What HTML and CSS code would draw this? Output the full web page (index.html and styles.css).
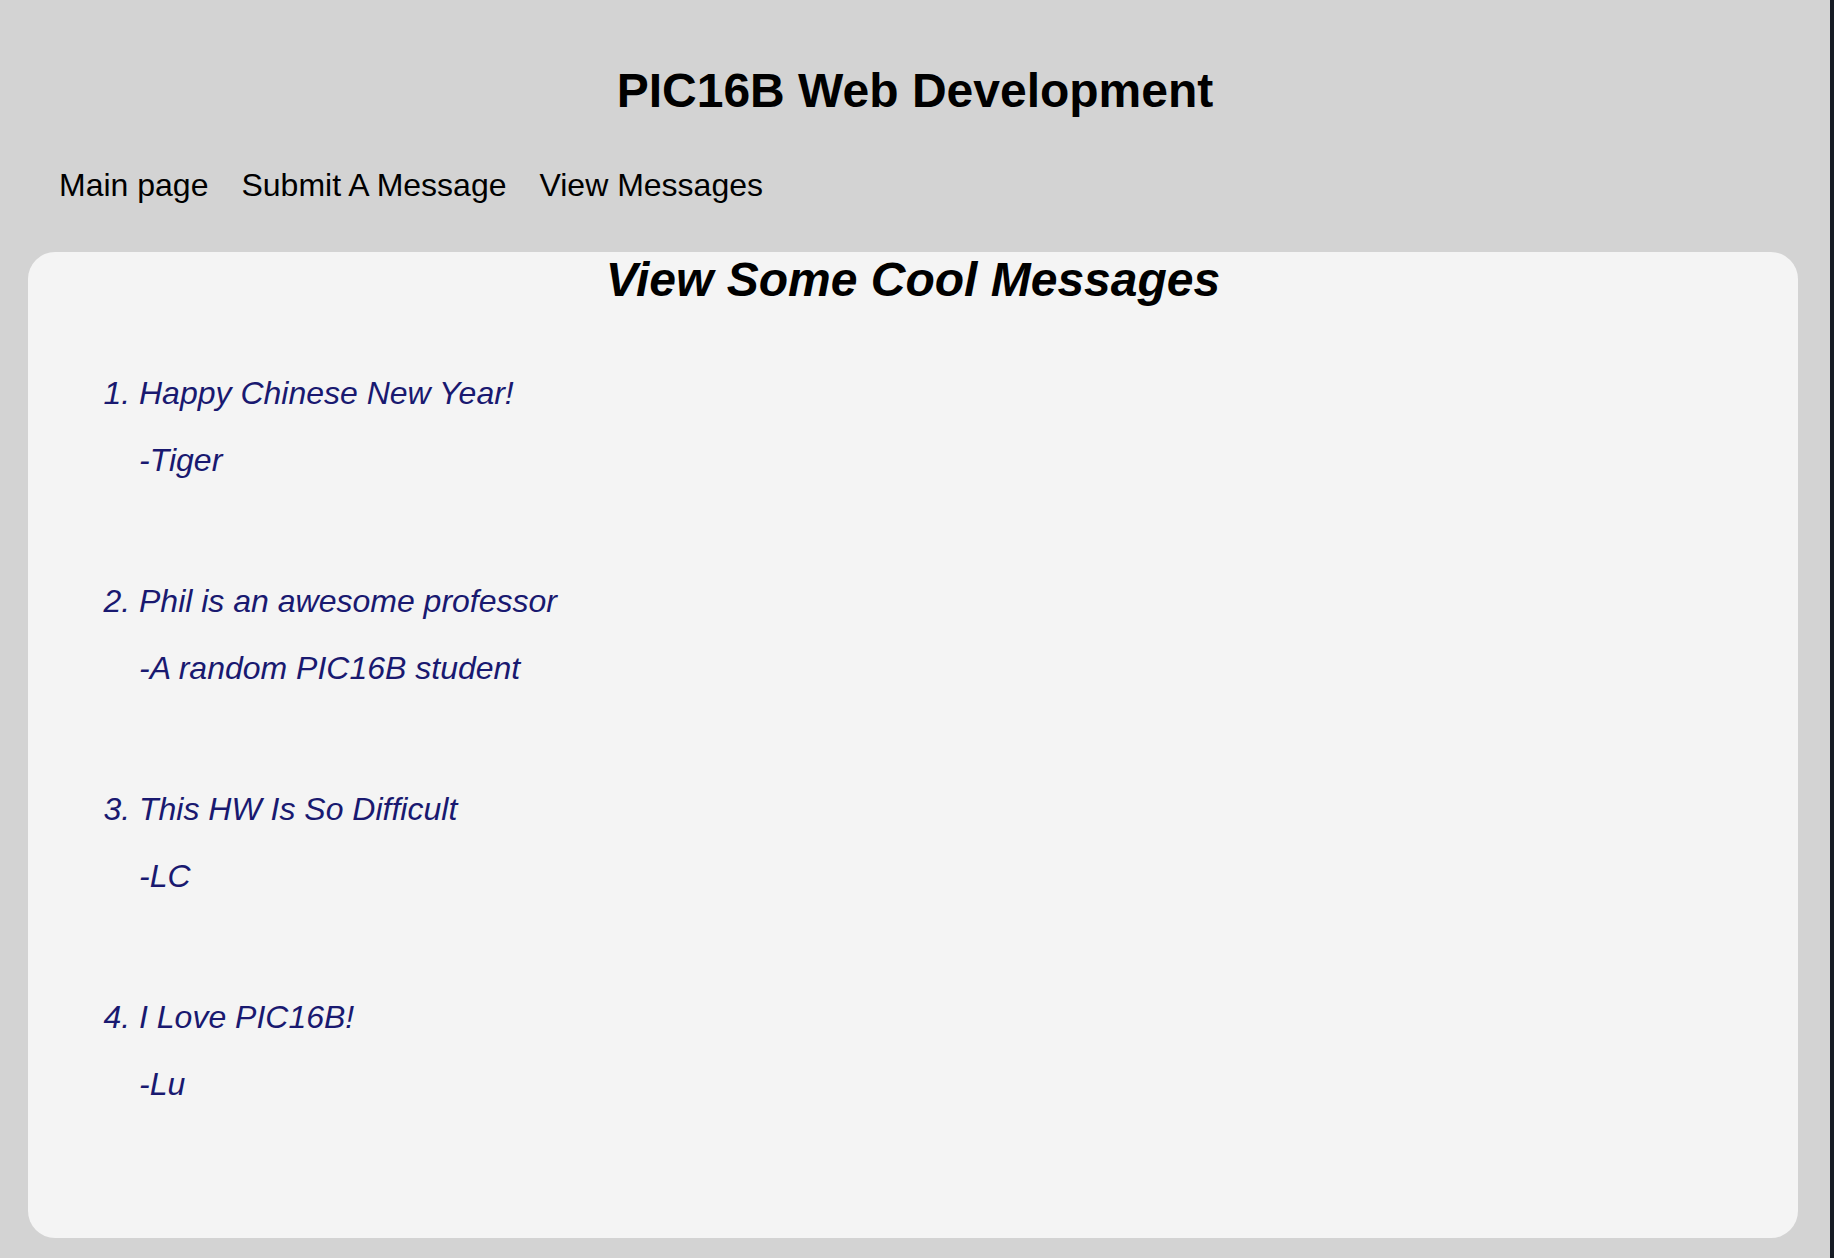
FILE: index.html
```html
<!DOCTYPE html>
<html lang="en">
<head>
<meta charset="utf-8">
<title>PIC16B Web Development</title>
<link rel="stylesheet" href="styles.css">
</head>
<body>
<header class="site-header">
  <h1 class="site-title">PIC16B Web Development</h1>
  <nav class="site-nav">
    <a class="nav-link" href="#">Main page</a>
    <a class="nav-link" href="#">Submit A Message</a>
    <a class="nav-link" href="#">View Messages</a>
  </nav>
</header>
<main class="card">
  <h2 class="card-title">View Some Cool Messages</h2>
  <ol class="messages">
    <li class="message">
      <div class="message-text">Happy Chinese New Year!</div>
      <p class="message-author">-Tiger</p>
    </li>
    <li class="message">
      <div class="message-text">Phil is an awesome professor</div>
      <p class="message-author">-A random PIC16B student</p>
    </li>
    <li class="message">
      <div class="message-text">This HW Is So Difficult</div>
      <p class="message-author">-LC</p>
    </li>
    <li class="message">
      <div class="message-text">I Love PIC16B!</div>
      <p class="message-author">-Lu</p>
    </li>
  </ol>
</main>
</body>
</html>
```

FILE: styles.css
```css
html {
  background: #d3d3d3;
  border-right: 4px solid #161b24;
  min-height: 100%;
}

body {
  margin: 0;
  font-family: "Liberation Sans", Arial, Helvetica, sans-serif;
  color: #000;
}

.site-header {
  padding-top: 63px;
}

.site-title {
  margin: 0;
  font-size: 48px;
  line-height: 55px;
  font-weight: bold;
  text-align: center;
}

.site-nav {
  display: flex;
  gap: 33px;
  margin-top: 49px;
  padding-left: 59px;
  font-size: 32px;
  line-height: 36px;
}

.nav-link {
  color: #000;
  text-decoration: none;
}

.card {
  margin: 49px 32px 0 28px;
  background: #f4f4f4;
  border-radius: 27px;
  padding: 0 0 136px 0;
}

.card-title {
  margin: 0;
  font-size: 48px;
  line-height: 55px;
  font-weight: bold;
  font-style: italic;
  text-align: center;
}

.messages {
  margin: 68px 0 0 0;
  padding-left: 111px;
  color: #191970;
  font-style: italic;
  font-size: 32px;
  line-height: 36px;
}

.message {
  margin-bottom: 105px;
}

.message:last-child {
  margin-bottom: 0;
}

.message-text {
  margin: 0;
}

.message-author {
  margin: 31px 0 0 0;
}
```
